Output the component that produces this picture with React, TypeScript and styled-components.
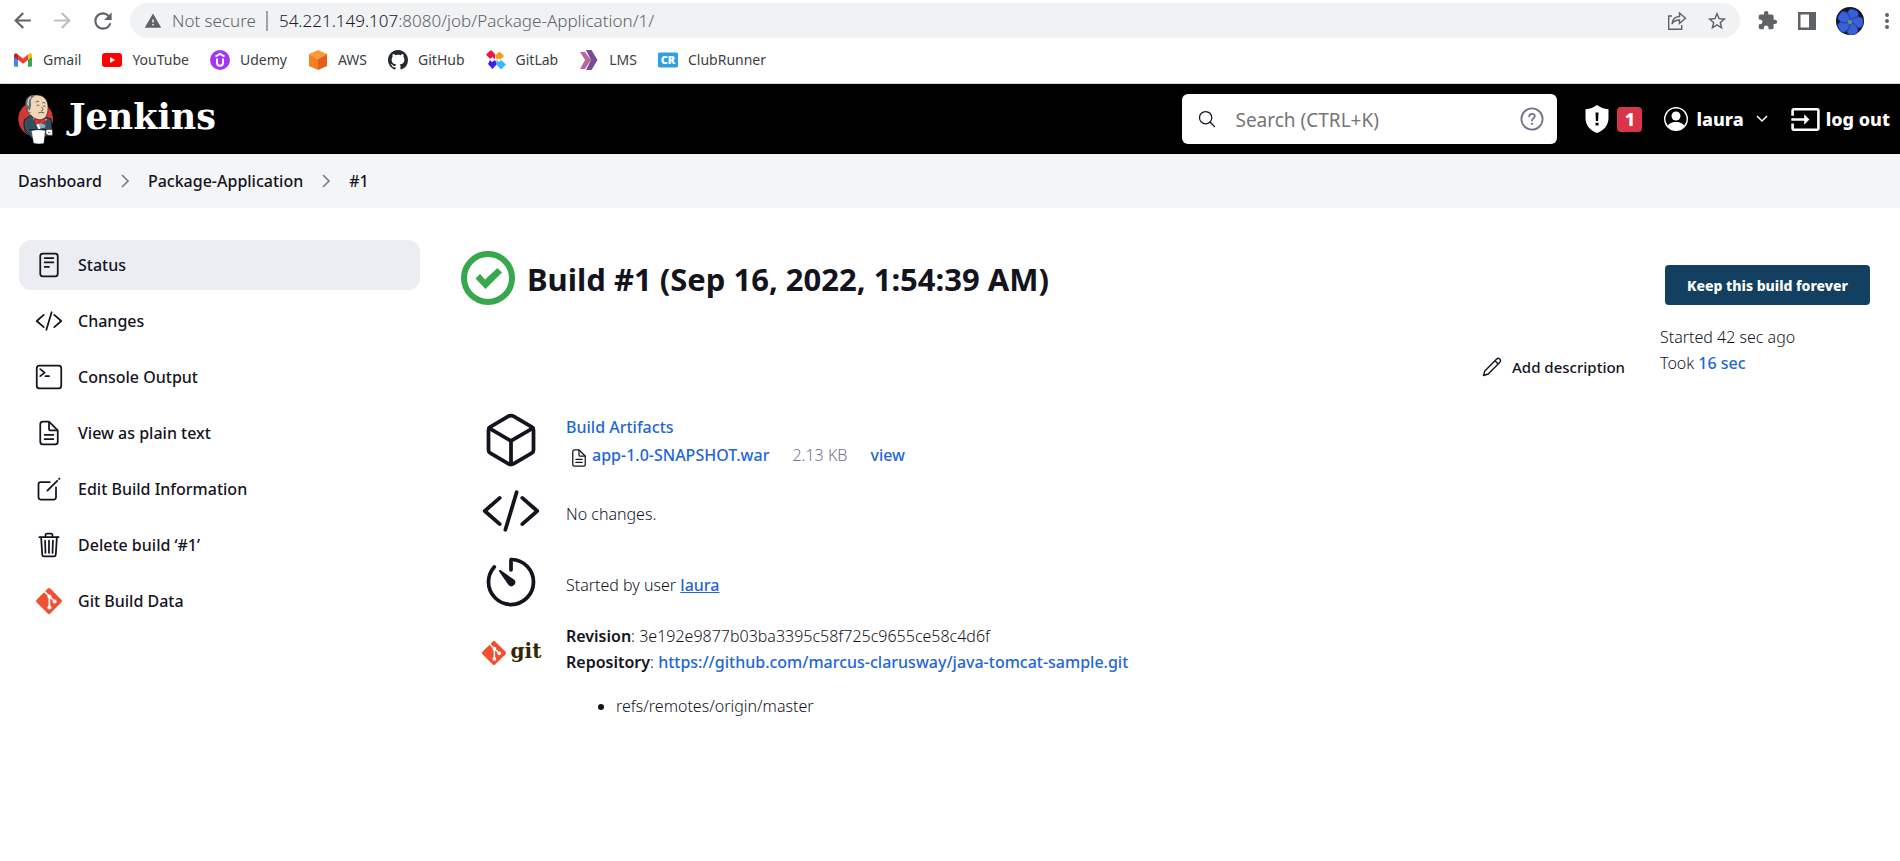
import React from 'react';
import styled, { createGlobalStyle } from 'styled-components';
import {
  IoReaderOutline,
  IoCodeSlashOutline,
  IoTerminalOutline,
  IoDocumentTextOutline,
  IoCreateOutline,
  IoTrashOutline,
  IoCubeOutline,
  IoTimerOutline,
  IoSearchOutline,
} from 'react-icons/io5';
import { MdArrowBack, MdArrowForward, MdRefresh, MdWarning, MdStarBorder, MdExtension, MdInput } from 'react-icons/md';
import { BsPersonCircle, BsGithub } from 'react-icons/bs';

const sans = '"Noto Sans", "Open Sans", sans-serif';
const ink = '#14141f';
const blue = '#1f66d6';

const GlobalStyle = createGlobalStyle`
  *, *::before, *::after { box-sizing: border-box; }
  body {
    margin: 0;
    background: #fff;
    color: ${ink};
    font-family: ${sans};
    font-size: 16px;
    font-weight: 300;
    line-height: 26px;
  }
  a { color: inherit; text-decoration: none; }
  button { font: inherit; color: inherit; border: 0; background: none; padding: 0; cursor: pointer; }
  svg { display: block; flex: none; }
`;

/* ---------- browser bar ---------- */

const BrowserBar = styled.div`
  border-bottom: 1px solid #d5d6d9;
`;

const AddressRow = styled.div`
  display: flex;
  align-items: center;
  padding: 3px 10px 1px;
`;

const NavButtons = styled.div`
  display: flex;
  gap: 14px;
  width: 120px;
  color: #5f6368;
`;

const NavButton = styled.button<{ $dim?: boolean }>`
  width: 26px;
  height: 26px;
  color: ${(p) => (p.$dim ? '#bcbec1' : '#5f6368')};
`;

const Omnibox = styled.div`
  flex: 1;
  display: flex;
  align-items: center;
  height: 35px;
  padding: 0 12px 0 14px;
  border-radius: 18px;
  background: #f0f2f4;
  color: #5f6368;
  font-size: 17px;
  font-weight: 400;
`;

const SecurityLabel = styled.span`
  margin-left: 10px;
  padding-right: 10px;
  border-right: 2px solid #a0a3a7;
  line-height: 20px;
  font-weight: 300;
`;

const Url = styled.div`
  flex: 1;
  margin-left: 11px;
  font-weight: 300;
`;

const Host = styled.span`
  color: #202124;
`;

const BoxActions = styled.div`
  display: flex;
  align-items: center;
  gap: 19px;
`;

const BrowserActions = styled.div`
  display: flex;
  align-items: center;
  gap: 20px;
  padding-left: 17px;
  color: #5f6368;
`;

const IconButton = styled.button`
  display: flex;
  align-items: center;
  justify-content: center;
`;

const Bookmarks = styled.nav`
  display: flex;
  align-items: center;
  gap: 21px;
  height: 44px;
  padding: 0 13px 2px;
  color: #3c4043;
  font-size: 14px;
  font-weight: 400;
`;

const Bookmark = styled.a`
  display: flex;
  align-items: center;
  gap: 10px;
`;

/* ---------- Jenkins header ---------- */

const Header = styled.header`
  display: flex;
  align-items: center;
  height: 70px;
  padding: 0 10px 0 18px;
  background: #000;
  color: #fff;
  font-size: 18px;
  font-weight: 800;
`;

const Brand = styled.a`
  display: flex;
  align-items: center;
  gap: 15px;
  margin-right: auto;
  font: 700 35px/44px "DejaVu Serif", serif;
`;

const BrandName = styled.span`
  padding-bottom: 4px;
`;

const SearchBox = styled.label`
  display: flex;
  align-items: center;
  width: 375px;
  height: 50px;
  padding: 0 13px 0 15px;
  border-radius: 6px;
  background: #fff;
  color: ${ink};
`;

const SearchInput = styled.input`
  flex: 1;
  min-width: 0;
  margin-left: 18px;
  padding: 2px 0 0;
  border: 0;
  outline: 0;
  background: none;
  font: 400 19px/26px ${sans};
  &::placeholder { color: #757575; opacity: 1; }
`;

const Alerts = styled.a`
  display: flex;
  align-items: center;
  gap: 8px;
  margin: 0 22px 0 28px;
`;

const AlertCount = styled.span`
  width: 25px;
  height: 25px;
  border-radius: 4px;
  background: #d93448;
  line-height: 25px;
  text-align: center;
`;

const HeaderLink = styled.a`
  display: flex;
  align-items: center;
  gap: 8px;
`;

const UserMenu = styled.button`
  margin: 0 22px 0 12px;
`;

const LogOut = styled(HeaderLink)`
  gap: 5px;
`;

/* ---------- breadcrumbs ---------- */

const Breadcrumbs = styled.nav`
  display: flex;
  align-items: center;
  gap: 18px;
  height: 54px;
  padding: 0 18px;
  background: #f4f5f7;
  font-weight: 500;
`;

/* ---------- page body ---------- */

const Page = styled.div`
  display: flex;
  gap: 41px;
  padding: 32px 30px 40px 19px;
`;

const SideNav = styled.nav`
  display: flex;
  flex-direction: column;
  gap: 6px;
  flex: none;
  width: 401px;
`;

const Task = styled.a<{ $active?: boolean }>`
  display: flex;
  align-items: center;
  gap: 15px;
  height: 50px;
  padding: 0 16px;
  border-radius: 12px;
  background: ${(p) => (p.$active ? '#ecedf3' : 'transparent')};
  font-weight: 500;
`;

const Main = styled.main`
  display: flex;
  flex: 1;
  gap: 35px;
  min-width: 0;
`;

const Build = styled.section`
  flex: 1;
  min-width: 0;
  padding-top: 11px;
`;

const Title = styled.h1`
  display: flex;
  align-items: center;
  gap: 12px;
  margin: 0;
  font-size: 31px;
  font-weight: 700;
  line-height: 54px;
`;

const TitleText = styled.span`
  padding-top: 2px;
  line-height: 52px;
`;

const AddDescription = styled.a`
  display: flex;
  align-items: center;
  justify-content: flex-end;
  gap: 10px;
  margin: 49px 0 29px;
  font-size: 15px;
  font-weight: 500;
`;

const Details = styled.div`
  display: grid;
  gap: 10px;
  padding-left: 19px;
`;

const Detail = styled.div`
  display: grid;
  grid-template-columns: 62px 1fr;
  column-gap: 24px;
`;

const DetailIcon = styled.div`
  display: flex;
  align-items: center;
  justify-content: center;
  height: 61px;
`;

const DetailText = styled.div<{ $top?: number }>`
  padding-top: ${(p) => p.$top ?? 1}px;
`;

const Link = styled.a<{ $underline?: boolean }>`
  color: ${blue};
  font-weight: 500;
  text-decoration: ${(p) => (p.$underline ? 'underline' : 'none')};
`;

const Artifacts = styled.div`
  line-height: 28px;
`;

const ArtifactRow = styled.div`
  display: flex;
  align-items: center;
  padding-left: 3px;
`;

const ArtifactIcon = styled.span`
  margin-right: 3px;
  padding-top: 5px;
`;

const FileSize = styled.span`
  margin: 0 23px;
  color: #73738c;
`;

const Label = styled.strong`
  font-weight: 600;
`;

const Refs = styled.ul`
  margin: 18px 0 0;
  padding-left: 50px;
`;

const GitMark = styled.div`
  display: flex;
  align-items: center;
  gap: 4px;
  color: #362701;
  font: 700 20px/26px "DejaVu Serif", serif;
`;

const GitWord = styled.span`
  padding-bottom: 4px;
`;

const BuildMeta = styled.aside`
  flex: none;
  display: flex;
  flex-direction: column;
  width: 210px;
  padding-top: 25px;
`;

const KeepButton = styled.button`
  align-self: flex-end;
  width: 205px;
  height: 40px;
  margin-bottom: 19px;
  padding-top: 1px;
  border-radius: 4px;
  background: #133f60;
  color: #fff;
  font-size: 14px;
  font-weight: 800;
`;

/* ---------- drawings ---------- */

const JenkinsMascot = () => (
  <svg width="36" height="50" viewBox="27 27 108 150">
    <ellipse cx="80" cy="102" rx="52" ry="53" fill="#d33833" />
    <path d="M46 104q-4 14 2 34l20 20h34l18-8 10-10-4-38-22-6-40-4z" fill="#335061" stroke="#14202a" strokeWidth="3" />
    <path d="M72 98l18 38 24-34z" fill="#fff" />
    <path d="M88 114l6 16 14-2 2-14z" fill="#81b0c4" />
    <path d="M52 62c-4-22 14-34 34-32 22 2 32 18 31 40 0 20-8 34-22 34-16 1-24-8-30-14-8-4-14-16-13-28z" fill="#f0d6b7" stroke="#231f20" strokeWidth="2" />
    <path d="M50 60c-3-18 8-28 22-30 4-1 8 1 4 4-9 4-12 12-10 22 1 8-2 14-4 22-6-2-11-8-12-18z" fill="#6d6b6d" />
    <path d="M66 36q-12 8-8 26" fill="none" stroke="#d9d9d9" strokeWidth="4" />
    <path d="M56 70q-4 4 1 10t8 2" fill="#f0d6b7" stroke="#231f20" strokeWidth="2" />
    <path d="M80 52q5-6 10-2M100 54q6-4 9 1M83 62q4-4 8 0M102 64q4-3 7 1M98 66q8 10-1 12M88 84q9-5 18 0" fill="none" stroke="#231f20" strokeWidth="2" />
    <path d="M76 100l16 6 16-6 1 18-15-5-16 6z" fill="#d33833" stroke="#7a1412" strokeWidth="2" />
    <path d="M60 134h50" stroke="#14202a" strokeWidth="4" />
    <path d="M68 138q18-6 40-1l-4 38q-16 3-30-1z" fill="#fff" stroke="#bbb" strokeWidth="1" />
    <path d="M110 136q10-6 20-2l1 16q-10 4-20-2z" fill="#fff" stroke="#231f20" strokeWidth="2" />
    <path d="M117 143h8" stroke="#231f20" strokeWidth="2" />
  </svg>
);

const GitLogo = ({ size }: { size: number }) => (
  <svg width={size} height={size} viewBox="0 0 28 28">
    <rect x="4.3" y="4.3" width="19.4" height="19.4" rx="1.8" transform="rotate(45 14 14)" fill="#f05133" />
    <path d="M9.6 4.6L14.4 9.4V20.4M14.4 9.4L20 14.6" stroke="#fff" strokeWidth="1.6" fill="none" />
    <g fill="#fff">
      <circle cx="14.4" cy="9.4" r="2" />
      <circle cx="19.6" cy="14.4" r="2" />
      <circle cx="14.4" cy="20.4" r="2" />
    </g>
  </svg>
);

const SuccessIcon = () => (
  <svg width="54" height="54" viewBox="0 0 54 54">
    <circle cx="27" cy="27" r="24" fill="none" stroke="#37a84d" strokeWidth="6" />
    <path d="M14.500 27.500L19 23l5 5.500L36.500 17l4.500 4.500L24.500 38z" fill="#37a84d" />
  </svg>
);

const PencilIcon = () => (
  <svg width="20" height="20" viewBox="0 0 20 20" fill="none" stroke={ink} strokeWidth="1.4" strokeLinejoin="round">
    <path d="M1.500 18.500l1.300-4.600L14.700 2q1.500-1.300 3 0t.2 3.200L6.200 17zM13 3.700l3.200 3.200" />
  </svg>
);

const CrumbArrow = () => (
  <svg width="10" height="14" viewBox="0 0 10 14" fill="none" stroke="#7c7c88" strokeWidth="1.700">
    <path d="M2 1l6 6-6 6" />
  </svg>
);

const DownArrow = () => (
  <svg width="12" height="8" viewBox="0 0 12 8" fill="none" stroke="#fff" strokeWidth="1.500">
    <path d="M1 1l5 5 5-5" />
  </svg>
);

const ShieldIcon = () => (
  <svg width="24" height="28" viewBox="0 0 24 28">
    <path d="M12 0c3 2.300 7 4 11.500 4.200V13c0 7-4.500 12.500-11.500 15C5 25.500.5 20 .5 13V4.200C5 4 9 2.300 12 0z" fill="#fff" />
    <path d="M10.500 7.500h3l-.4 8.500h-2.200zM10.500 17.800h3v2.700h-3z" fill="#000" />
  </svg>
);

const HelpIcon = () => (
  <svg width="24" height="24" viewBox="0 0 24 24" fill="none" stroke="#73738c" strokeWidth="1.800" strokeLinecap="round">
    <circle cx="12" cy="12" r="10.600" />
    <path d="M9.200 9.300q.3-2.500 2.900-2.500t2.700 2.300q0 1.400-1.500 2.300-1.300.8-1.300 2.100" />
    <circle cx="12" cy="16.800" r=".5" strokeWidth="1.300" />
  </svg>
);

const ShareIcon = () => (
  <svg width="20" height="20" viewBox="0 0 20 20" fill="none" stroke="#5f6368" strokeWidth="1.400">
    <path d="M5 5H1.700v13.300h13V14M5 13c.3-5 3-7.300 7.500-7.500V2l6 5.200-6 5.300V9C9 9 6.600 10 5 13z" />
  </svg>
);

const PanelIcon = () => (
  <svg width="18" height="18" viewBox="0 0 18 18">
    <path d="M0 0h18v18H0zM2.500 2.500v13h8.500v-13z" fill="#5f6368" fillRule="evenodd" />
  </svg>
);

const FlowerAvatar = () => (
  <svg width="28" height="28" viewBox="0 0 28 28">
    <circle cx="14" cy="14" r="14" fill="#0e1a1c" />
    <g fill="#3a5fd9" stroke="#16308f" strokeWidth=".7">
      {[20, 92, 164, 236, 308].map((turn) => (
        <path key={turn} d="M14 15C7 11 7 3 11.500 2h5C21 3 21 11 14 15z" transform={`rotate(${turn} 14 15)`} />
      ))}
    </g>
    <circle cx="14" cy="15" r="2" fill="#7d9a4a" />
  </svg>
);

const DotsIcon = () => (
  <svg width="6" height="18" viewBox="0 0 6 18" fill="#5f6368">
    <circle cx="3" cy="3" r="2" />
    <circle cx="3" cy="9" r="2" />
    <circle cx="3" cy="15" r="2" />
  </svg>
);

const Tile = ({ children }: { children: React.ReactNode }) => (
  <svg width="20" height="20" viewBox="0 0 20 20">
    {children}
  </svg>
);

const bookmarks: { name: string; icon: React.ReactNode }[] = [
  {
    name: 'Gmail',
    icon: (
      <Tile>
        <path d="M1 5v10.500q0 1.300 1.300 1.300H5V8z" fill="#4285f4" />
        <path d="M19 5v10.500q0 1.300-1.300 1.300H15V8z" fill="#34a853" />
        <path d="M1 5.500q0-2.300 2-2.300l2 1.300V10L1 7z" fill="#c5221f" />
        <path d="M19 5.500q0-2.300-2-2.300l-2 1.300V10l4-3z" fill="#fbbc04" />
        <path d="M5 4.500l5 4 5-4V10l-5 3.800L5 10z" fill="#ea4335" />
      </Tile>
    ),
  },
  {
    name: 'YouTube',
    icon: (
      <Tile>
        <rect y="3" width="20" height="14" rx="3" fill="#f00" />
        <path d="M8 7v6l5.200-3z" fill="#fff" />
      </Tile>
    ),
  },
  {
    name: 'Udemy',
    icon: (
      <Tile>
        <circle cx="10" cy="10" r="10" fill="#a435f0" />
        <path d="M5.500 6.500L10 3.800l4.500 2.700M7 8.500v4.300q0 3 3 3t3-3V8.500" fill="none" stroke="#fff" strokeWidth="2" />
      </Tile>
    ),
  },
  {
    name: 'AWS',
    icon: (
      <Tile>
        <path d="M10 0l9 4-9 5-9-5z" fill="#fa9c34" />
        <path d="M1 4l9 5v11l-9-4z" fill="#f58220" />
        <path d="M19 4l-9 5v11l9-4z" fill="#e3601c" />
      </Tile>
    ),
  },
  { name: 'GitHub', icon: <BsGithub size={20} color="#24292f" /> },
  {
    name: 'GitLab',
    icon: (
      <Tile>
        <path d="M0 4.500L5 0l4 4v5.500L6.500 7 4 9z" fill="#e8174b" />
        <path d="M9 5.500L13.500 1.500 18 6l-4 4-1-2-2 2z" fill="#f59a1b" />
        <path d="M2 14l2-4 2 2 3-2 2 4-4.500 5z" fill="#3a22ee" />
        <path d="M10.500 10l2.500 2 2-2 5 4.500-5 5-4.500-5z" fill="#38b6ff" />
      </Tile>
    ),
  },
  {
    name: 'LMS',
    icon: (
      <Tile>
        <path d="M1 2h5l6 8-6 9H1l5-9z" fill="#b86a9c" />
        <path d="M7 0h5.500l6 10-6 10H7l5-10z" fill="#7b4b94" />
      </Tile>
    ),
  },
  {
    name: 'ClubRunner',
    icon: (
      <Tile>
        <rect y="2.500" width="20" height="15" rx="1.500" fill="#2f9fe6" />
        <text x="10" y="14" textAnchor="middle" fontFamily="Open Sans, sans-serif" fontWeight="800" fontSize="11" fill="#fff">
          CR
        </text>
      </Tile>
    ),
  },
];

const tasks: { name: string; icon: React.ReactNode; active?: boolean }[] = [
  { name: 'Status', icon: <IoReaderOutline size={28} />, active: true },
  { name: 'Changes', icon: <IoCodeSlashOutline size={28} /> },
  { name: 'Console Output', icon: <IoTerminalOutline size={28} /> },
  { name: 'View as plain text', icon: <IoDocumentTextOutline size={28} /> },
  { name: 'Edit Build Information', icon: <IoCreateOutline size={28} /> },
  { name: 'Delete build ‘#1’', icon: <IoTrashOutline size={28} /> },
  { name: 'Git Build Data', icon: <GitLogo size={28} /> },
];

export default function App() {
  return (
    <>
      <GlobalStyle />
      <BrowserBar>
        <AddressRow>
          <NavButtons>
            <NavButton aria-label="Back"><MdArrowBack size={25} /></NavButton>
            <NavButton aria-label="Forward" $dim><MdArrowForward size={25} /></NavButton>
            <NavButton aria-label="Reload"><MdRefresh size={26} /></NavButton>
          </NavButtons>
          <Omnibox>
            <MdWarning size={18} />
            <SecurityLabel>Not secure</SecurityLabel>
            <Url role="textbox" aria-label="Address">
              <Host>54.221.149.107</Host>:8080/job/Package-Application/1/
            </Url>
            <BoxActions>
              <IconButton aria-label="Share"><ShareIcon /></IconButton>
              <IconButton aria-label="Bookmark this page"><MdStarBorder size={22} /></IconButton>
            </BoxActions>
          </Omnibox>
          <BrowserActions>
            <IconButton aria-label="Extensions"><MdExtension size={21} /></IconButton>
            <IconButton aria-label="Side panel"><PanelIcon /></IconButton>
            <IconButton aria-label="Profile"><FlowerAvatar /></IconButton>
            <IconButton aria-label="Menu"><DotsIcon /></IconButton>
          </BrowserActions>
        </AddressRow>
        <Bookmarks>
          {bookmarks.map((b) => (
            <Bookmark key={b.name} href="#">
              {b.icon}
              {b.name}
            </Bookmark>
          ))}
        </Bookmarks>
      </BrowserBar>

      <Header>
        <Brand href="#">
          <JenkinsMascot />
          <BrandName>Jenkins</BrandName>
        </Brand>
        <SearchBox>
          <IoSearchOutline size={20} />
          <SearchInput type="text" aria-label="Search" placeholder="Search (CTRL+K)" />
          <HelpIcon />
        </SearchBox>
        <Alerts href="#">
          <ShieldIcon />
          <AlertCount>1</AlertCount>
        </Alerts>
        <HeaderLink href="#">
          <BsPersonCircle size={24} />
          laura
        </HeaderLink>
        <UserMenu aria-label="User menu"><DownArrow /></UserMenu>
        <LogOut href="#">
          <MdInput size={31} />
          log out
        </LogOut>
      </Header>

      <Breadcrumbs>
        <a href="#">Dashboard</a>
        <CrumbArrow />
        <a href="#">Package-Application</a>
        <CrumbArrow />
        <a href="#">#1</a>
      </Breadcrumbs>

      <Page>
        <SideNav>
          {tasks.map((t) => (
            <Task key={t.name} href="#" $active={t.active}>
              {t.icon}
              {t.name}
            </Task>
          ))}
        </SideNav>

        <Main>
          <Build>
            <Title>
              <SuccessIcon />
              <TitleText>Build #1 (Sep 16, 2022, 1:54:39 AM)</TitleText>
            </Title>
            <AddDescription href="#">
              <PencilIcon />
              Add description
            </AddDescription>
            <Details>
              <Detail>
                <DetailIcon><IoCubeOutline size={60} /></DetailIcon>
                <DetailText $top={4}>
                  <Artifacts>
                    <Link href="#">Build Artifacts</Link>
                    <ArtifactRow>
                      <ArtifactIcon><IoDocumentTextOutline size={20} /></ArtifactIcon>
                      <Link href="#">app-1.0-SNAPSHOT.war</Link>
                      <FileSize>2.13 KB</FileSize>
                      <Link href="#">view</Link>
                    </ArtifactRow>
                  </Artifacts>
                </DetailText>
              </Detail>
              <Detail>
                <DetailIcon><IoCodeSlashOutline size={60} /></DetailIcon>
                <DetailText $top={21}>No changes.</DetailText>
              </Detail>
              <Detail>
                <DetailIcon><IoTimerOutline size={60} /></DetailIcon>
                <DetailText $top={21}>
                  Started by user <Link href="#" $underline>laura</Link>
                </DetailText>
              </Detail>
              <Detail>
                <DetailIcon>
                  <GitMark>
                    <GitLogo size={26} />
                    <GitWord>git</GitWord>
                  </GitMark>
                </DetailIcon>
                <DetailText>
                  <div><Label>Revision</Label>: 3e192e9877b03ba3395c58f725c9655ce58c4d6f</div>
                  <div>
                    <Label>Repository</Label>: <Link href="#">https://github.com/marcus-clarusway/java-tomcat-sample.git</Link>
                  </div>
                  <Refs>
                    <li>refs/remotes/origin/master</li>
                  </Refs>
                </DetailText>
              </Detail>
            </Details>
          </Build>

          <BuildMeta>
            <KeepButton>Keep this build forever</KeepButton>
            <div>Started 42 sec ago</div>
            <div>Took <Link href="#">16 sec</Link></div>
          </BuildMeta>
        </Main>
      </Page>
    </>
  );
}
